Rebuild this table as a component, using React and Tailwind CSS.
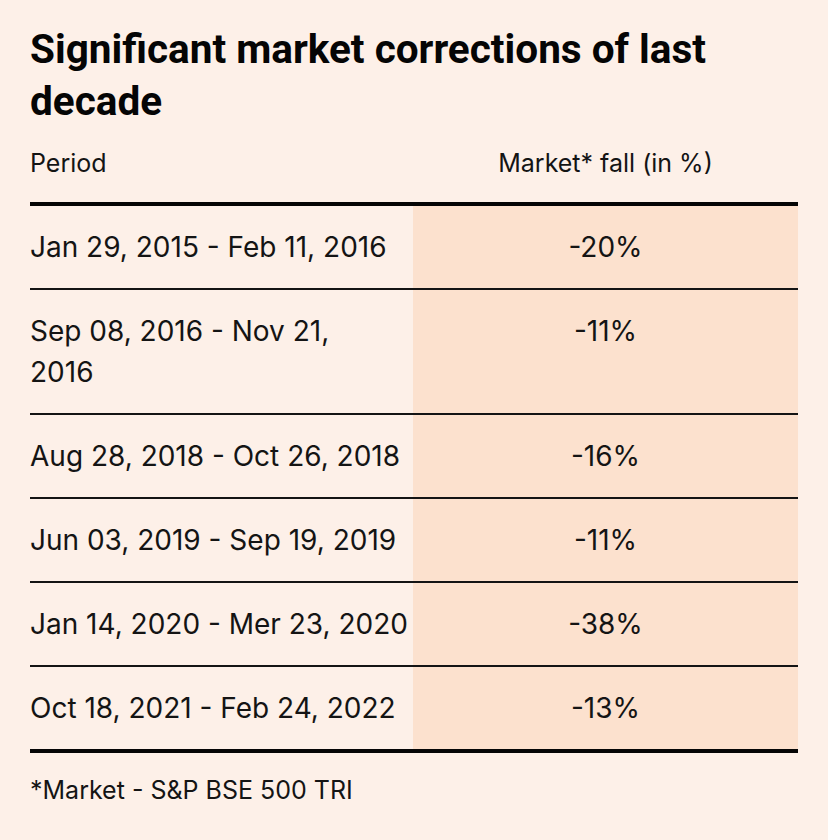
const rows = [
  { period: ['Jan 29, 2015 - Feb 11, 2016'], fall: '-20%' },
  { period: ['Sep 08, 2016 - Nov 21,', '2016'], fall: '-11%' },
  { period: ['Aug 28, 2018 - Oct 26, 2018'], fall: '-16%' },
  { period: ['Jun 03, 2019 - Sep 19, 2019'], fall: '-11%' },
  { period: ['Jan 14, 2020 - Mer 23, 2020'], fall: '-38%' },
  { period: ['Oct 18, 2021 - Feb 24, 2022'], fall: '-13%' },
];

export default function App() {
  return (
    <div className="min-h-screen w-full bg-[#fdf0e8] px-[30px] pt-[23px] pb-10 text-[#141414] font-['Inter',sans-serif]">
      {/* Titel */}
      <h1 className="max-w-[720px] font-['Roboto',sans-serif] text-[40.5px] leading-[52px] font-bold text-[#050505]">
        Significant market corrections of last decade
      </h1>

      {/* Tabel */}
      <div className="mt-[18px] w-[768px]">
        <div className="grid grid-cols-[383px_1fr] text-[25px] leading-[36px] pb-[21px] border-b-4 border-[#050505]">
          <div>Period</div>
          <div className="text-center">Market* fall (in %)</div>
        </div>

        {rows.map((r, i) => (
          <div
            key={i}
            className={`grid grid-cols-[383px_1fr] text-[28px] leading-[41px] ${
              i === rows.length - 1 ? 'border-b-4 border-[#050505]' : 'border-b-2 border-[#141414]'
            }`}
          >
            <div className="pt-[21px] pb-[20px] whitespace-nowrap">
              {r.period.map((line, j) => (
                <div key={j}>{line}</div>
              ))}
            </div>
            <div className="pt-[21px] pb-[20px] bg-[#fce1ce] text-center">{r.fall}</div>
          </div>
        ))}
      </div>

      {/* Catatan kaki */}
      <p className="mt-[19px] text-[25px] leading-[36px]">*Market - S&amp;P BSE 500 TRI</p>
    </div>
  );
}
